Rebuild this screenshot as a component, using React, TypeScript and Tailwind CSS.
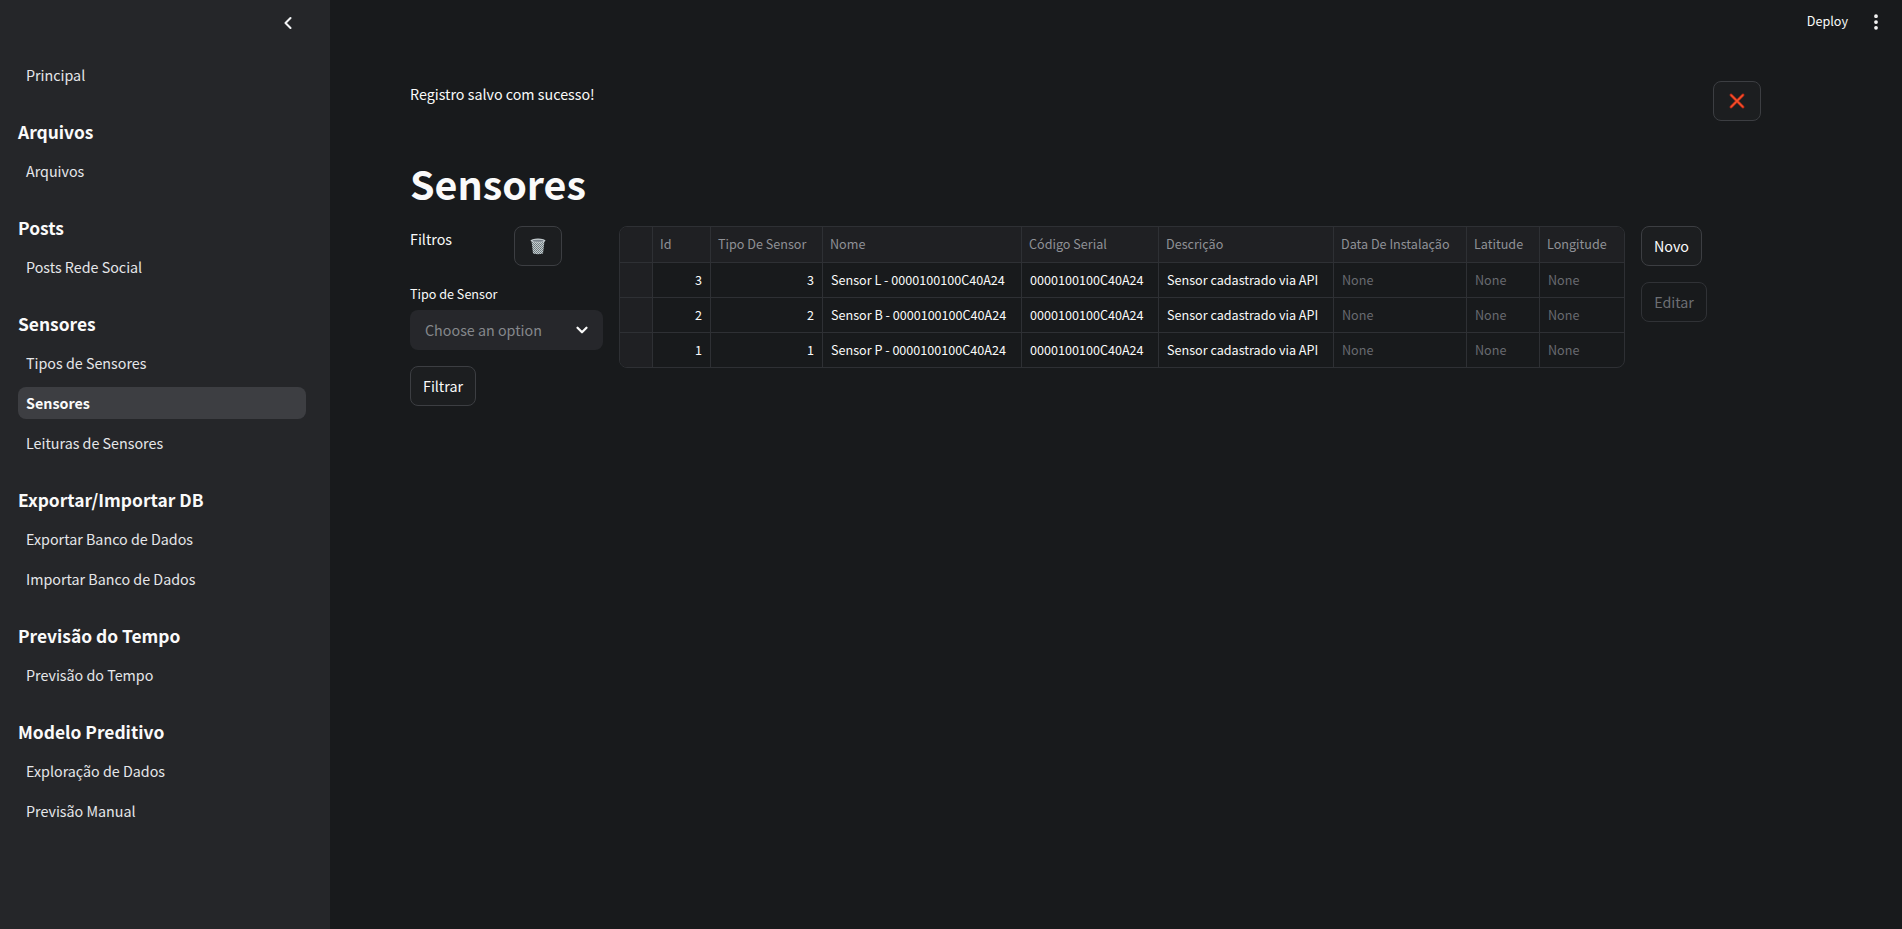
import { ChevronDown, ChevronLeft, EllipsisVertical } from "lucide-react";

// Noto Sans CJK's latin glyphs run large, so sizes below are scaled down a bit
const font = "font-['Noto_Sans_CJK_SC','Noto_Sans',sans-serif]";

type NavGroup = { title?: string; items: string[] };

const nav: NavGroup[] = [
  { items: ["Principal"] },
  { title: "Arquivos", items: ["Arquivos"] },
  { title: "Posts", items: ["Posts Rede Social"] },
  { title: "Sensores", items: ["Tipos de Sensores", "Sensores", "Leituras de Sensores"] },
  { title: "Exportar/Importar DB", items: ["Exportar Banco de Dados", "Importar Banco de Dados"] },
  { title: "Previsão do Tempo", items: ["Previsão do Tempo"] },
  { title: "Modelo Preditivo", items: ["Exploração de Dados", "Previsão Manual"] },
];

const columns = [
  { label: "", width: "w-[33px]" },
  { label: "Id", width: "w-[58px]" },
  { label: "Tipo De Sensor", width: "w-[112px]" },
  { label: "Nome", width: "w-[199px]" },
  { label: "Código Serial", width: "w-[137px]" },
  { label: "Descrição", width: "w-[175px]" },
  { label: "Data De Instalação", width: "w-[133px]" },
  { label: "Latitude", width: "w-[73px]" },
  { label: "Longitude", width: "flex-1" },
];

const rows = [
  ["3", "3", "Sensor L - 0000100100C40A24"],
  ["2", "2", "Sensor B - 0000100100C40A24"],
  ["1", "1", "Sensor P - 0000100100C40A24"],
];

function TrashIcon() {
  return (
    <svg width="16" height="17" viewBox="0 0 16 17">
      <defs>
        <pattern id="mesh" width="2" height="2" patternUnits="userSpaceOnUse">
          <rect width="2" height="2" fill="#c3cccf" />
          <rect width="1" height="1" fill="#6c777a" />
          <rect x="1" y="1" width="1" height="1" fill="#778285" />
        </pattern>
      </defs>
      <path d="M1.5 3 L14.5 3 L13 15.5 Q8 17 3 15.5 Z" fill="url(#mesh)" />
      <ellipse cx="8" cy="2.6" rx="7.5" ry="2" fill="#c6ced1" />
      <ellipse cx="8" cy="2.8" rx="5.5" ry="1" fill="#79828a" />
    </svg>
  );
}

function CloseIcon() {
  return (
    <svg width="16" height="16" viewBox="0 0 16 16">
      <path d="M2 2 L14 14 M14 2 L2 14" stroke="#c92e18" strokeWidth="2.8" strokeLinecap="round" />
      <path d="M2.5 2.5 L13.5 13.5 M13.5 2.5 L2.5 13.5" stroke="#f4512c" strokeWidth="1.3" strokeLinecap="round" />
    </svg>
  );
}

function Sidebar() {
  return (
    <aside className="w-[330px] shrink-0 min-h-[929px] bg-[#252629] pl-[18px] pr-[24px]">
      <div className="h-[46px] flex items-center justify-end pr-[8px]">
        <ChevronLeft size={20} strokeWidth={2.5} className="text-[#f3f4f5]" />
      </div>
      <nav className="pt-[13px]">
        {nav.map((group, i) => (
          <div key={i} className={group.title ? "mt-[25px]" : ""}>
            {group.title && (
              <h3 className="h-[32px] mb-[7px] text-[17.4px] leading-[32px] font-bold text-[#fafafa]">
                {group.title}
              </h3>
            )}
            <div className="flex flex-col gap-[8px]">
              {group.items.map((item) => {
                const active = item === "Sensores";
                return (
                  <a
                    key={item}
                    className={`h-[32px] px-2 rounded-lg flex items-center text-[14.3px] ${
                      active ? "bg-[#3d3e42] font-bold text-[#fafafa]" : "text-[#e6e7e9]"
                    }`}
                  >
                    {item}
                  </a>
                );
              })}
            </div>
          </div>
        ))}
      </nav>
    </aside>
  );
}

function DataTable() {
  const cell = "h-full flex items-center border-r border-[#2e3034] last:border-r-0 overflow-hidden whitespace-nowrap";
  const body = `${cell} px-2`;
  return (
    <div className="w-[1006px] h-[142px] border border-[#2e3034] rounded-lg overflow-hidden text-[12.6px] leading-none">
      <div className="h-[36px] flex bg-[#1f2023] text-[#8f9196] border-b border-[#2e3034]">
        {columns.map((c) => (
          <div key={c.label} className={`${c.width} ${cell} px-[7px]`}>
            {c.label}
          </div>
        ))}
      </div>
      {rows.map((row, i) => (
        <div key={row[0]} className={`h-[35px] flex ${i < 2 ? "border-b border-[#2e3034]" : ""}`}>
          <div className={`w-[33px] bg-[#1f2023] ${body}`} />
          <div className={`w-[58px] justify-end text-[#fafafa] ${body}`}>{row[0]}</div>
          <div className={`w-[112px] justify-end text-[#fafafa] ${body}`}>{row[1]}</div>
          <div className={`w-[199px] text-[#fafafa] ${body}`}>{row[2]}</div>
          <div className={`w-[137px] text-[#fafafa] ${body}`}>0000100100C40A24</div>
          <div className={`w-[175px] text-[#fafafa] ${body}`}>Sensor cadastrado via API</div>
          <div className={`w-[133px] text-[#696b70] ${body}`}>None</div>
          <div className={`w-[73px] text-[#696b70] ${body}`}>None</div>
          <div className={`flex-1 text-[#696b70] ${body}`}>None</div>
        </div>
      ))}
    </div>
  );
}

const button = "h-[40px] rounded-lg border border-[#3c3e42] bg-[#1c1e20] flex items-center justify-center text-[14.3px]";

export default function App() {
  return (
    <div className={`${font} flex min-h-[929px] bg-[#181a1c] text-[#fafafa]`}>
      <Sidebar />
      <main className="flex-1 relative pl-[80px]">
        <div className="absolute top-0 right-0 h-[43px] flex items-center gap-[18px] pr-[16px] text-[12.6px]">
          <span>Deploy</span>
          <EllipsisVertical size={20} strokeWidth={2.5} />
        </div>

        <div className="pt-[81px] w-[1351px] flex justify-between items-start">
          <p className="text-[14.3px] leading-[26px]">Registro salvo com sucesso!</p>
          <button className={`${button} w-[48px]`}>
            <CloseIcon />
          </button>
        </div>

        <h1 className="mt-[27px] h-[70px] text-[39.4px] leading-[70px] font-bold">Sensores</h1>

        <div className="mt-[8px] flex items-start">
          <div className="w-[193px] shrink-0">
            <div className="flex items-start">
              <span className="w-[104px] text-[14.3px] leading-[26px]">Filtros</span>
              <button className={`${button} w-[48px]`}>
                <TrashIcon />
              </button>
            </div>
            <label className="block mt-[16px] h-[28px] text-[12.6px] leading-[24px]">Tipo de Sensor</label>
            <div className="h-[40px] rounded-lg bg-[#26272b] pl-[15px] pr-[12px] flex items-center justify-between text-[14.3px] text-[#85878c]">
              Choose an option
              <ChevronDown size={18} strokeWidth={3} className="text-[#fafafa]" />
            </div>
            <button className={`${button} mt-[16px] w-[66px]`}>Filtrar</button>
          </div>

          <div className="ml-[16px]">
            <DataTable />
          </div>

          <div className="ml-[16px] flex flex-col items-start gap-[16px]">
            <button className={`${button} w-[61px]`}>Novo</button>
            <button className={`${button} w-[66px] bg-transparent border-[#303236] text-[#6d6f74]`}>Editar</button>
          </div>
        </div>
      </main>
    </div>
  );
}
